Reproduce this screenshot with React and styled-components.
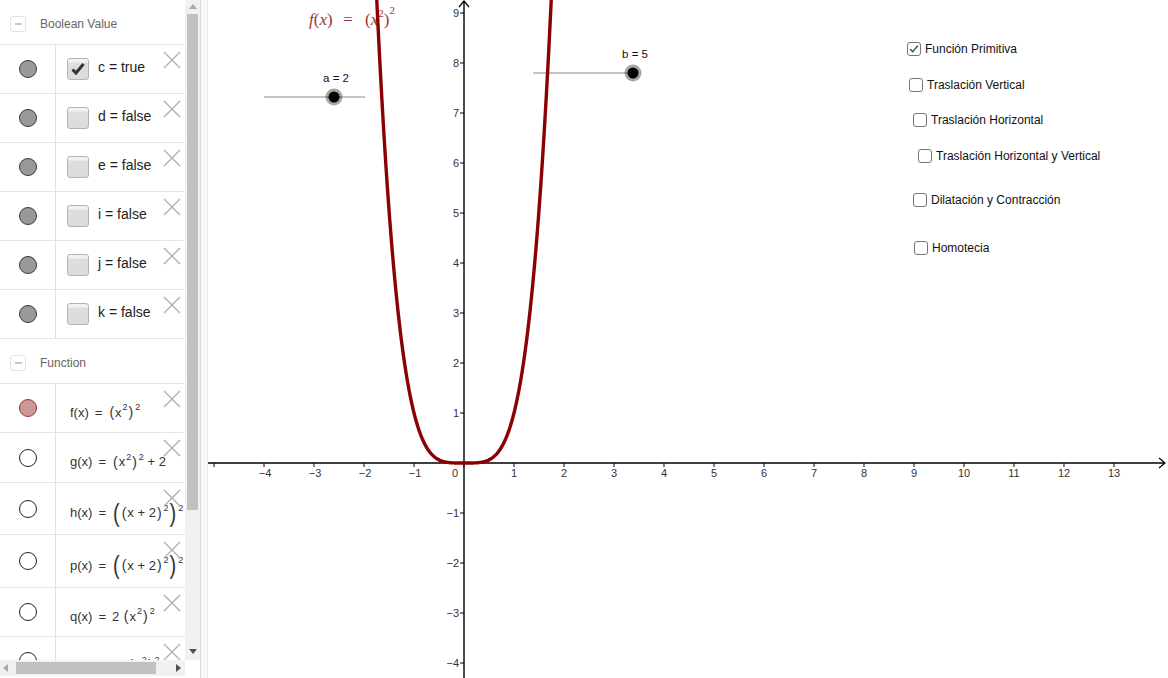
import React from "react";
import styled, { createGlobalStyle, css } from "styled-components";

const GlobalStyle = createGlobalStyle`
	html, body {
		margin: 0;
		padding: 0;
		background: #fff;
	}
	body {
		font-family: "Liberation Sans", Arial, sans-serif;
		overflow: hidden;
	}
`;

// graph scale: 50px per unit, origin inside the graphics view
const UNIT = 50;
const OX = 256;
const OY = 463;
const VIEW_W = 960;
const VIEW_H = 678;

const booleans = [
	{ name: "c", value: true },
	{ name: "d", value: false },
	{ name: "e", value: false },
	{ name: "i", value: false },
	{ name: "j", value: false },
	{ name: "k", value: false },
];

const options = [
	{ label: "Función Primitiva", x: 699, y: 42, checked: true },
	{ label: "Traslación Vertical", x: 701, y: 78 },
	{ label: "Traslación Horizontal", x: 705, y: 113 },
	{ label: "Traslación Horizontal y Vertical", x: 710, y: 149 },
	{ label: "Dilatación y Contracción", x: 705, y: 193 },
	{ label: "Homotecia", x: 706, y: 241 },
];

const Layout = styled.div`
	display: flex;
	width: 1168px;
	height: 678px;
	overflow: hidden;
`;

/* ---------- algebra view ---------- */

const AlgebraPanel = styled.div`
	flex: none;
	width: 200px;
	display: grid;
	grid-template-columns: 185px 15px;
	grid-template-rows: 660px 18px;
`;

const AlgebraList = styled.div`
	overflow: hidden;
`;

const GroupHeader = styled.div`
	display: flex;
	align-items: center;
	height: ${(p) => p.$height}px;
	box-sizing: border-box;
	padding: 3px 0 0 10px;
	border-bottom: 1px solid #e4e4e4;
`;

const CollapseIcon = styled.span`
	width: 14px;
	height: 14px;
	border: 1px solid #e2e2e2;
	border-radius: 3px;
	display: flex;
	align-items: center;
	justify-content: center;

	&::after {
		content: "";
		width: 7px;
		height: 2px;
		background: #c8c8c8;
	}
`;

const GroupTitle = styled.span`
	margin-left: 14px;
	font-size: 12px;
	color: #666;
`;

const Row = styled.div`
	position: relative;
	display: grid;
	grid-template-columns: 56px 1fr;
	height: ${(p) => p.$height || 49}px;
	box-sizing: border-box;
	border-bottom: 1px solid #e4e4e4;
`;

const MarbleCell = styled.div`
	display: flex;
	align-items: center;
	justify-content: center;
	border-right: 1px solid #e0e0e0;
`;

const Marble = styled.span`
	width: 18px;
	height: 18px;
	border-radius: 50%;
	box-sizing: border-box;
	${(p) =>
		p.$kind === "bool" &&
		css`
			background: #999;
			border: 1px solid #3a3a3a;
		`}
	${(p) =>
		p.$kind === "fn" &&
		css`
			background: #cc9999;
			border: 1px solid #993333;
		`}
	${(p) =>
		p.$kind === "off" &&
		css`
			background: #fff;
			border: 1px solid #222;
		`}
`;

const ItemCell = styled.div`
	display: flex;
	align-items: center;
	padding-left: ${(p) => p.$indent || 11}px;
	padding-top: ${(p) => p.$drop || 0}px;
	overflow: hidden;
	white-space: nowrap;
`;

const BoolBox = styled.span`
	flex: none;
	width: 22px;
	height: 22px;
	box-sizing: border-box;
	border: 1px solid #b4b4b4;
	border-radius: 3px;
	background: linear-gradient(#f2f2f2 0, #f2f2f2 3px, #dedede 4px, #dcdcdc);
	display: flex;
	align-items: center;
	justify-content: center;
`;

const ItemText = styled.span`
	margin: 0 0 4px 9px;
	font-size: 14px;
	color: #222;
`;

const Formula = styled.span`
	font-size: 13px;
	color: #333;
	display: inline-flex;
	align-items: center;

	sup {
		font-size: 9px;
		position: relative;
		top: -5px;
		margin-left: 1px;
	}
`;

const Eq = styled.span`
	margin: 0 6px;
`;

const Paren = styled.span`
	font-size: ${(p) => (p.$big ? 20 : 14)}px;
	font-weight: 300;
	line-height: 1;
	transform: scaleY(${(p) => (p.$big ? 1.3 : 1.1)});
	margin: 0 1px;
`;

const DeleteButton = styled.span`
	position: absolute;
	top: 6px;
	right: 4px;
	width: 18px;
	height: 18px;
	line-height: 0;
`;

const VScroll = styled.div`
	background: #f1f1f1;
	display: flex;
	flex-direction: column;
	align-items: center;
	padding-top: 4px;
	box-sizing: border-box;
`;

const HScroll = styled.div`
	background: #f1f1f1;
	height: 16px;
	display: flex;
	align-items: center;
	padding: 0 4px 0 3px;
`;

const ScrollThumb = styled.div`
	background: #c1c1c1;
	${(p) =>
		p.$vertical
			? css`
					width: 11px;
					height: 496px;
					margin-top: 5px;
			  `
			: css`
					height: 12px;
					width: 140px;
					margin-left: 8px;
			  `}
`;

const Spacer = styled.div`
	flex: 1;
`;

const ScrollArrow = styled.span`
	width: 0;
	height: 0;
	${(p) => {
		const c = p.$dim ? "#a8a8a8" : "#505050";
		switch (p.$dir) {
			case "up":
				return css`
					border-left: 4px solid transparent;
					border-right: 4px solid transparent;
					border-bottom: 5px solid ${c};
				`;
			case "down":
				return css`
					border-left: 4px solid transparent;
					border-right: 4px solid transparent;
					border-top: 5px solid ${c};
					margin-bottom: 6px;
				`;
			case "left":
				return css`
					border-top: 4px solid transparent;
					border-bottom: 4px solid transparent;
					border-right: 5px solid ${c};
				`;
			default:
				return css`
					border-top: 4px solid transparent;
					border-bottom: 4px solid transparent;
					border-left: 5px solid ${c};
				`;
		}
	}}
`;

const Corner = styled.div`
	background: #fff;
`;

const Splitter = styled.div`
	flex: none;
	width: 8px;
	box-sizing: border-box;
	background: #f7f7f7;
	border-left: 1px solid #dadada;
	border-right: 1px solid #e8e8e8;
`;

/* ---------- graphics view ---------- */

const GraphicsView = styled.div`
	position: relative;
	flex: 1;
	height: 678px;
	overflow: hidden;
`;

const Canvas = styled.svg`
	display: block;
	font-family: "Liberation Sans", Arial, sans-serif;
`;

const CheckOption = styled.label`
	position: absolute;
	left: ${(p) => p.$x}px;
	top: ${(p) => p.$y}px;
	display: flex;
	align-items: center;
	gap: 4px;
	font-size: 12px;
	color: #111;
	white-space: nowrap;
`;

const CheckSquare = styled.span`
	width: 14px;
	height: 14px;
	box-sizing: border-box;
	border: 1px solid #767676;
	border-radius: 3px;
	background: #fff;
	display: flex;
	align-items: center;
	justify-content: center;
`;

const CrossIcon = () => (
	<svg width='18' height='18' viewBox='0 0 18 18'>
		<path
			d='M1 1 L17 17 M17 1 L1 17'
			stroke='#b0b0b0'
			strokeWidth='1.4'
			fill='none'
		/>
	</svg>
);

const BigCheck = () => (
	<svg width='16' height='16' viewBox='0 0 16 16'>
		<path
			d='M2.5 8.5 L6 12 L13.5 3'
			stroke='#333'
			strokeWidth='3'
			fill='none'
			strokeLinejoin='miter'
		/>
	</svg>
);

const SmallCheck = () => (
	<svg width='12' height='12' viewBox='0 0 12 12'>
		<path
			d='M2.2 6.2 L4.8 8.8 L9.8 2.6'
			stroke='#444'
			strokeWidth='1.4'
			fill='none'
		/>
	</svg>
);

const functions = [
	{
		kind: "fn",
		height: 49,
		body: (
			<>
				f(x)<Eq>=</Eq>
				<Paren>(</Paren>x<sup>2</sup>
				<Paren>)</Paren>
				<sup>2</sup>
			</>
		),
	},
	{
		kind: "off",
		height: 50,
		body: (
			<>
				g(x)<Eq>=</Eq>
				<Paren>(</Paren>x<sup>2</sup>
				<Paren>)</Paren>
				<sup>2</sup>&nbsp;+ 2
			</>
		),
	},
	{
		kind: "off",
		height: 52,
		body: (
			<>
				h(x)<Eq>=</Eq>
				<Paren $big>(</Paren>
				<Paren>(</Paren>x + 2<Paren>)</Paren>
				<sup>2</sup>
				<Paren $big>)</Paren>
				<sup>2</sup>
			</>
		),
	},
	{
		kind: "off",
		height: 53,
		body: (
			<>
				p(x)<Eq>=</Eq>
				<Paren $big>(</Paren>
				<Paren>(</Paren>x + 2<Paren>)</Paren>
				<sup>2</sup>
				<Paren $big>)</Paren>
				<sup>2</sup>&nbsp;− 2
			</>
		),
	},
	{
		kind: "off",
		height: 49,
		body: (
			<>
				q(x)<Eq>=</Eq>2&nbsp;
				<Paren>(</Paren>x<sup>2</sup>
				<Paren>)</Paren>
				<sup>2</sup>
			</>
		),
	},
	{
		kind: "off",
		height: 49,
		body: (
			<>
				r(x)<Eq>=</Eq>−2&nbsp;
				<Paren>(</Paren>x<sup>2</sup>
				<Paren>)</Paren>
				<sup>2</sup>
			</>
		),
	},
];

const curvePath = (() => {
	const pts = [];
	for (let x = -1.78; x <= 1.7801; x += 0.01) {
		const px = OX + UNIT * x;
		const py = OY - UNIT * Math.pow(x, 4);
		pts.push(`${px.toFixed(2)},${py.toFixed(2)}`);
	}
	return "M" + pts.join(" L");
})();

const Slider = ({ x1, x2, y, at, label }) => (
	<g>
		<line x1={x1} y1={y} x2={x2} y2={y} stroke='#8c8c8c' strokeWidth='1' />
		<text x={at + 2} y={y - 15} fontSize='11.5' textAnchor='middle' fill='#111'>
			{label}
		</text>
		<circle cx={at} cy={y} r='8.5' fill='#000' opacity='0.35' />
		<circle cx={at} cy={y} r='5.5' fill='#000' />
	</g>
);

const Graph = () => {
	const xTicks = [];
	for (let i = -5; i <= 13; i++) xTicks.push(i);
	const yTicks = [];
	for (let j = -4; j <= 9; j++) yTicks.push(j);

	return (
		<Canvas width={VIEW_W} height={VIEW_H} viewBox={`0 0 ${VIEW_W} ${VIEW_H}`}>
			{/* axes */}
			<line x1='0' y1={OY} x2='957' y2={OY} stroke='#000' strokeWidth='1.4' />
			<path
				d={`M951 ${OY - 5} L957 ${OY} L951 ${OY + 5}`}
				stroke='#000'
				strokeWidth='1.2'
				fill='none'
			/>
			<line x1={OX} y1='1' x2={OX} y2={VIEW_H} stroke='#000' strokeWidth='1.4' />
			<path
				d={`M${OX - 5} 7 L${OX} 1 L${OX + 5} 7`}
				stroke='#000'
				strokeWidth='1.2'
				fill='none'
			/>

			{xTicks.map((i) => (
				<g key={`x${i}`}>
					<line
						x1={OX + UNIT * i}
						y1={OY}
						x2={OX + UNIT * i}
						y2={OY + 4}
						stroke='#000'
						strokeWidth='1'
					/>
					{i !== 0 && i > -5 && (
						<text
							x={OX + UNIT * i + (i < 0 ? 1 : 0)}
							y={OY + 14}
							fontSize='11'
							textAnchor='middle'
							fill='#333'
						>
							{i < 0 ? `−${-i}` : i}
						</text>
					)}
				</g>
			))}
			<text x={OX - 9} y={OY + 14} fontSize='11' textAnchor='middle' fill='#333'>
				0
			</text>

			{yTicks.map((j) =>
				j === 0 ? null : (
					<g key={`y${j}`}>
						<line
							x1={OX - 4}
							y1={OY - UNIT * j}
							x2={OX}
							y2={OY - UNIT * j}
							stroke='#000'
							strokeWidth='1'
						/>
						<text
							x={OX - 5}
							y={OY - UNIT * j + 4}
							fontSize='11'
							textAnchor='end'
							fill='#333'
						>
							{j < 0 ? `−${-j}` : j}
						</text>
					</g>
				)
			)}

			{/* function label */}
			<text
				y='25'
				fontFamily='"Liberation Serif", "DejaVu Serif", serif'
				fontSize='17'
				fill='#a03333'
			>
				<tspan x='101' fontStyle='italic'>
					f
				</tspan>
				<tspan>(</tspan>
				<tspan fontStyle='italic'>x</tspan>
				<tspan>)</tspan>
				<tspan x='135'>=</tspan>
				<tspan x='157'>(</tspan>
				<tspan fontStyle='italic'>x</tspan>
				<tspan dy='-8' fontSize='11'>
					2
				</tspan>
				<tspan dy='8'>)</tspan>
				<tspan dy='-11' fontSize='11'>
					2
				</tspan>
			</text>

			<Slider x1={56} x2={157} y={97} at={126} label='a = 2' />
			<Slider x1={325} x2={425} y={73} at={425} label='b = 5' />

			<path
				d={curvePath}
				stroke='#8b0000'
				strokeWidth='3.4'
				fill='none'
				strokeLinejoin='round'
			/>
		</Canvas>
	);
};

const App = () => {
	return (
		<Layout>
			<GlobalStyle />
			<AlgebraPanel>
				<AlgebraList>
					<GroupHeader $height={45}>
						<CollapseIcon />
						<GroupTitle>Boolean Value</GroupTitle>
					</GroupHeader>
					{booleans.map((b) => (
						<Row key={b.name}>
							<MarbleCell>
								<Marble $kind='bool' />
							</MarbleCell>
							<ItemCell>
								<BoolBox>{b.value && <BigCheck />}</BoolBox>
								<ItemText>
									{b.name} = {b.value ? "true" : "false"}
								</ItemText>
							</ItemCell>
							<DeleteButton>
								<CrossIcon />
							</DeleteButton>
						</Row>
					))}
					<GroupHeader $height={45}>
						<CollapseIcon />
						<GroupTitle>Function</GroupTitle>
					</GroupHeader>
					{functions.map((f, idx) => (
						<Row key={idx} $height={f.height}>
							<MarbleCell>
								<Marble $kind={f.kind} />
							</MarbleCell>
							<ItemCell $indent={14} $drop={8}>
								<Formula>{f.body}</Formula>
							</ItemCell>
							<DeleteButton>
								<CrossIcon />
							</DeleteButton>
						</Row>
					))}
				</AlgebraList>
				<VScroll>
					<ScrollArrow $dir='up' $dim />
					<ScrollThumb $vertical />
					<Spacer />
					<ScrollArrow $dir='down' />
				</VScroll>
				<HScroll>
					<ScrollArrow $dir='left' $dim />
					<ScrollThumb />
					<Spacer />
					<ScrollArrow $dir='right' />
				</HScroll>
				<Corner />
			</AlgebraPanel>
			<Splitter />
			<GraphicsView>
				<Graph />
				{options.map((o) => (
					<CheckOption key={o.label} $x={o.x} $y={o.y}>
						<CheckSquare>{o.checked && <SmallCheck />}</CheckSquare>
						{o.label}
					</CheckOption>
				))}
			</GraphicsView>
		</Layout>
	);
};

export default App;
